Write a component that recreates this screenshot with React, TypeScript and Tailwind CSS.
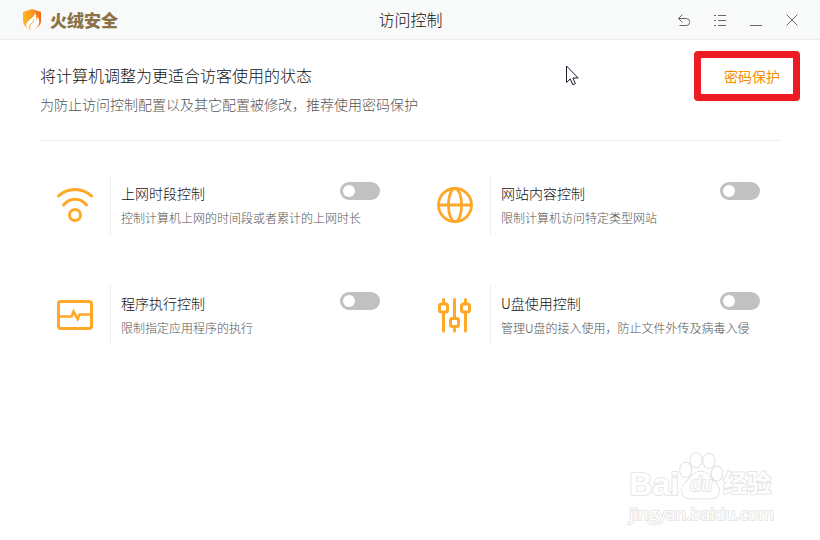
import { useState } from 'react'
import type { ReactNode } from 'react'

interface Control {
  id: string
  title: string
  description: string
  icon: ReactNode
}

function ShieldLogo() {
  return (
    <svg width="20" height="22" viewBox="0 0 20 22" aria-hidden="true">
      <defs>
        <linearGradient id="shield" x1="0" y1="0" x2="1" y2="0">
          <stop offset="0" stopColor="#ffb526" />
          <stop offset="0.5" stopColor="#ff9a1f" />
          <stop offset="1" stopColor="#f4661c" />
        </linearGradient>
      </defs>
      <path d="M10 0 19 3v9c0 4-4 7.500-9 9.800C5 19.500 1 16 1 12V3Z" fill="url(#shield)" />
      <path d="M12.500 3.500c.6 3-1.500 4.600-4 6.500C5 12.600 3.300 15 4.600 17.600c1 1.600 2.800 2.800 5.400 4.400 4-2 7-5 7.200-9 .1-2.500-.7-4-1.700-5.500 0 1.800-.4 2.800-1.200 3.800.3-3-.3-5.800-1.800-7.800Z" fill="#fff" />
      <path d="M12 10.500c.2 2.800-3.600 4-4.300 6.500-.2 1 0 2 .5 3" stroke="#ff9a1f" strokeWidth="1" fill="none" />
    </svg>
  )
}

function WifiIcon() {
  return (
    <svg width="36" height="36" viewBox="0 0 36 36" fill="none" stroke="#ffa726" strokeWidth="3" strokeLinecap="round" aria-hidden="true">
      <path d="M1.500 9C10.500.2 25.500.2 34.500 9" />
      <path d="M6.500 18c6.300-7.800 16.700-7.800 23 0" />
      <circle cx="18" cy="28" r="5.500" />
    </svg>
  )
}

function GlobeIcon() {
  return (
    <svg width="36" height="36" viewBox="0 0 36 36" fill="none" stroke="#ffa726" strokeWidth="2.800" aria-hidden="true">
      <circle cx="18" cy="18" r="16.500" />
      <ellipse cx="18" cy="18" rx="6.600" ry="16.500" />
      <path d="M1 18h34" />
    </svg>
  )
}

function MonitorIcon() {
  return (
    <svg width="36" height="36" viewBox="0 0 36 36" fill="none" stroke="#ffa726" aria-hidden="true">
      <rect x="1.500" y="4.500" width="33" height="27" rx="2.500" strokeWidth="3" />
      <path d="M2 19.500h12.600l2-5 4 7.500 2-4.500h12" strokeWidth="2.600" />
    </svg>
  )
}

function SlidersIcon() {
  return (
    <svg width="36" height="36" viewBox="0 0 36 36" fill="none" stroke="#ffa726" strokeWidth="3" strokeLinecap="round" aria-hidden="true">
      <path d="M6.500 2.500v3M6.500 16v18M17.500 2.500v17M17.500 30.500v3.500M28.500 2.500v3M28.500 16v18" />
      <rect x="2.500" y="7" width="8" height="8" rx="2" />
      <rect x="13.500" y="21.500" width="8" height="8" rx="2" />
      <rect x="24.500" y="7" width="8" height="8" rx="2" />
    </svg>
  )
}

const controls: Control[] = [
  { id: 'time', title: '上网时段控制', description: '控制计算机上网的时间段或者累计的上网时长', icon: <WifiIcon /> },
  { id: 'site', title: '网站内容控制', description: '限制计算机访问特定类型网站', icon: <GlobeIcon /> },
  { id: 'program', title: '程序执行控制', description: '限制指定应用程序的执行', icon: <MonitorIcon /> },
  { id: 'usb', title: 'U盘使用控制', description: '管理U盘的接入使用，防止文件外传及病毒入侵', icon: <SlidersIcon /> },
]

const windowButtons = [
  { label: '返回', path: 'M5.500 1.500 1.500 5.500l4 4M1.500 5.500h8a3 3 0 0 1 3 3v1a3 3 0 0 1-3 3h-7' },
  { label: '菜单', path: 'M1 2.500h2M5 2.500h8M1 7.500h2M5 7.500h8M1 12.500h2M5 12.500h8' },
  { label: '最小化', path: 'M1 12.500h12' },
  { label: '关闭', path: 'M1.500 1.500l11 11M12.500 1.500l-11 11' },
]

function ControlCard({ control }: { control: Control }) {
  const [enabled, setEnabled] = useState(false)

  return (
    <div className="flex h-[60px] pr-5">
      <div className="flex w-[70px] shrink-0 items-center justify-center">{control.icon}</div>
      <div className="flex min-w-0 flex-1 items-start justify-between border-l border-[#eeeeee] pl-[10px]">
        <div className="pt-2">
          <label htmlFor={control.id} className="block text-sm font-light text-[#111111]">{control.title}</label>
          <p id={`${control.id}-desc`} className="mt-[7px] -mr-10 text-xs font-light whitespace-nowrap text-[#555555]">{control.description}</p>
        </div>
        <input
          id={control.id}
          type="checkbox"
          role="switch"
          aria-describedby={`${control.id}-desc`}
          checked={enabled}
          onChange={() => setEnabled(!enabled)}
          className="mt-[7px] h-[18px] w-10 shrink-0 cursor-pointer appearance-none rounded-full bg-[#c1c1c1] p-[3px] before:block before:size-3 before:rounded-full before:bg-white checked:bg-[#ffa726] checked:before:ml-auto"
        />
      </div>
    </div>
  )
}

function Watermark() {
  return (
    <div className="pointer-events-none absolute right-[46px] bottom-4 text-white [-webkit-text-stroke:2px_#e6e6e6] [paint-order:stroke_fill]">
      <div className="mb-1 flex items-end">
        <span className="font-['Liberation_Sans'] text-[32px] leading-8 font-bold">Bai</span>
        <div className="relative h-[50px] w-11">
          <svg width="44" height="50" viewBox="0 0 44 50" fill="#fff" stroke="#dadada" strokeWidth="1.600" aria-hidden="true">
            <ellipse cx="6.700" cy="20" rx="5.600" ry="7.300" />
            <ellipse cx="17" cy="10" rx="5.600" ry="7.500" />
            <ellipse cx="30" cy="11" rx="5.800" ry="7.200" />
            <ellipse cx="38" cy="23.500" rx="5.400" ry="7.200" />
            <path d="M22 21.500c5.500 0 7.500 3.500 10 6.500 3.500 4 8 6.500 8 12.500 0 5.500-3.500 8-8.500 8h-20c-5 0-8.500-3-8.500-8 0-6 4.500-8.500 8-12.500 2.500-3 5.500-6.500 11-6.500Z" />
          </svg>
          <span className="absolute inset-x-0 bottom-1 text-center font-['Liberation_Sans'] text-xl leading-6 italic">du</span>
        </div>
        <span className="text-2xl leading-9 font-bold">经验</span>
      </div>
      <div className="font-['Open_Sans'] text-[17px] leading-5">jingyan.baidu.com</div>
    </div>
  )
}

export default function App() {
  return (
    <div className="relative min-h-screen bg-white font-['Noto_Sans_CJK_SC',sans-serif]">
      {/* Title bar */}
      <header className="grid h-10 grid-cols-3 items-center border-b border-[#ebebeb] bg-[#f8faf9] pr-[21px] pl-[22px]">
        <div className="flex items-center gap-2">
          <ShieldLogo />
          <span className="text-[17px] leading-6 font-black text-[#8b7346]">火绒安全</span>
        </div>
        <h1 className="pb-px text-center text-base font-light text-[#111111]">访问控制</h1>
        <div className="flex justify-end gap-[22px]">
          {windowButtons.map((b) => (
            <button key={b.label} type="button" aria-label={b.label} className="cursor-pointer">
              <svg width="14" height="14" viewBox="0 0 14 14" fill="none" stroke="#666666" aria-hidden="true">
                <path d={b.path} />
              </svg>
            </button>
          ))}
        </div>
      </header>

      <main className="px-10">
        {/* Intro */}
        <section className="flex h-[101px] items-start justify-between border-b border-[#eeeeee] pt-6">
          <div>
            <h2 className="text-base leading-[22px] font-light text-[#111111]">将计算机调整为更适合访客使用的状态</h2>
            <p className="mt-2 text-sm font-light text-[#555555]">为防止访问控制配置以及其它配置被修改，推荐使用密码保护</p>
          </div>
          <div className="relative">
            <button type="button" className="block cursor-pointer text-sm leading-6 text-[#f78c00]">密码保护</button>
            <span className="pointer-events-none absolute -top-[13px] -right-5 -bottom-[13px] -left-[30px] rounded border-[7px] border-[#ed1c24]" />
          </div>
        </section>

        {/* Controls */}
        <section className="grid grid-cols-2 gap-x-5 gap-y-[50px] pt-[34px]">
          {controls.map((c) => (
            <ControlCard key={c.id} control={c} />
          ))}
        </section>
      </main>

      <svg className="pointer-events-none absolute top-[65px] left-[566px]" width="13" height="21" viewBox="0 0 13 21" aria-hidden="true">
        <path d="M.5 1v16.500l3.800-3.600 2.500 5.800 2.600-1.100-2.500-5.600h5.300Z" fill="#fff" stroke="#1a1a2a" />
      </svg>

      <Watermark />
    </div>
  )
}
